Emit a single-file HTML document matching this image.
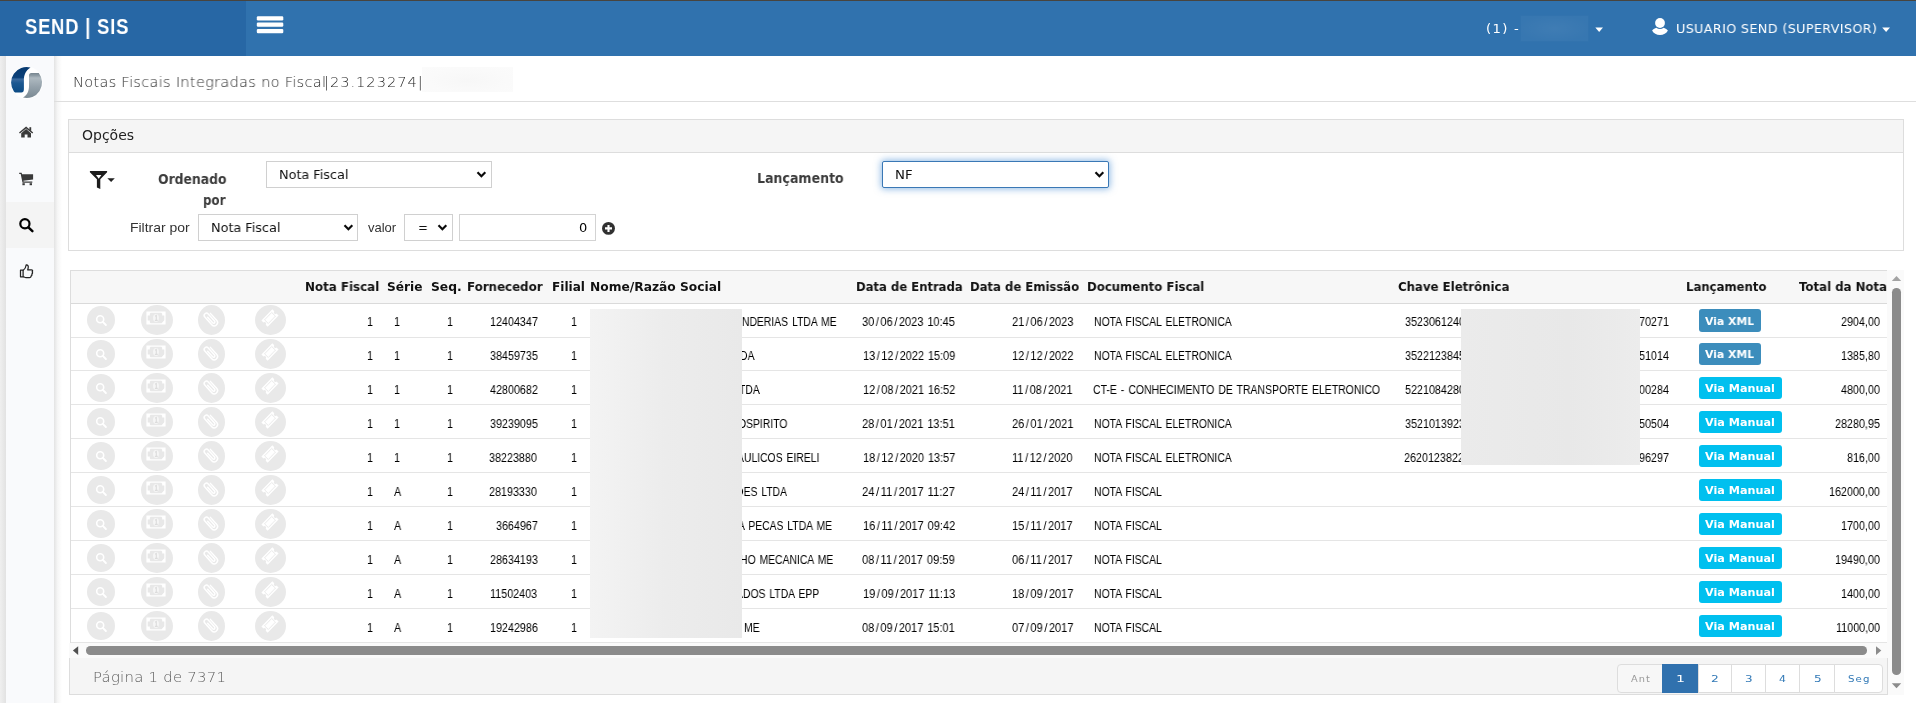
<!DOCTYPE html>
<html lang="pt-BR">
<head>
<meta charset="utf-8">
<title>SEND | SIS - Notas Fiscais Integradas no Fiscal</title>
<style>
html,body{margin:0;padding:0}
body{width:1916px;height:703px;overflow:hidden;background:#fff;position:relative;font-family:"Liberation Sans",sans-serif;font-size:12px;color:#000}
header,aside,main,section,nav,table,thead,tbody,tr,th,td,ul,li,form,label,footer,h1,h2{display:contents;margin:0;padding:0;font:inherit}
.a{position:absolute;box-sizing:border-box}
.t{position:absolute;z-index:3;will-change:transform;white-space:pre;line-height:1;display:block;transform-origin:0 0}
svg.a{overflow:visible}
.sel{position:absolute;box-sizing:border-box;background:#fff;border:1px solid #d0d0d0;border-radius:0}
.circ{position:absolute;box-sizing:border-box;background:#e9e9e9;border-radius:50%}
.rowline{position:absolute;left:71px;width:1816px;height:1px;background:#e5e5e5}
.btn{position:absolute;box-sizing:border-box;border-radius:3px}
.pg{position:absolute;box-sizing:border-box;top:664px;height:29px;border:1px solid #ddd;background:#fff}
.t i{display:inline-block;font-style:normal;width:.56em;text-align:center}
</style>
</head>
<body>
<header><div class="a" style="left:0;top:0;width:1916px;height:56px;background:#3072ae"></div><div class="a" style="left:0;top:0;width:246px;height:56px;background:#2767a5"></div><div class="a" style="left:0;top:0;width:1916px;height:1px;background:#48443e"></div><span class="t" style="left:24.59px;top:16.20px;font-family:'Liberation Sans', sans-serif;font-size:21.6px;font-weight:700;color:#fff;letter-spacing:1px;transform:scaleX(0.8480);">SEND | SIS</span><svg class="a" style="left:256px;top:15px" width="28" height="20" viewBox="256 15 28 20"><g fill="#fff"><rect x="256.8" y="16.3" width="26.5" height="4.2" rx="1.2"/><rect x="256.8" y="22.6" width="26.5" height="4.2" rx="1.2"/><rect x="256.8" y="28.9" width="26.5" height="4.3" rx="1.2"/></g></svg><nav><span class="t" style="left:1486.02px;top:21.90px;font-family:'DejaVu Sans', 'Liberation Sans', sans-serif;font-size:13px;font-weight:400;color:#fff;letter-spacing:1.3px;transform:scaleX(1.0124);">(1) -</span><div class="a" style="left:1521px;top:16px;width:67px;height:25px;background:radial-gradient(ellipse at 50% 50%,rgba(255,255,255,.075),rgba(255,255,255,.035) 75%);box-shadow:0 0 2px 1px rgba(255,255,255,.02)"></div><svg class="a" style="left:1595px;top:27px" width="9" height="6" viewBox="0 0 9 6"><path d="M0.3,0.6 H8 L4.15,4.9 Z" fill="#fff"/></svg><svg class="a" style="left:1651px;top:18px" width="18" height="18" viewBox="1651 18 18 18"><g fill="#fff"><circle cx="1660" cy="23" r="4.9"/><path d="M1652.1,30.5 C1653.4,29 1655,28.2 1656.3,27.7 C1658.5,29.4 1661.5,29.4 1663.7,27.7 C1665,28.2 1666.6,29 1667.9,30.5 C1666.5,33.3 1663.5,35 1660,35 C1656.5,35 1653.5,33.3 1652.1,30.5 Z"/></g></svg><span class="t" style="left:1676.18px;top:21.90px;font-family:'DejaVu Sans', 'Liberation Sans', sans-serif;font-size:13px;font-weight:400;color:#fff;letter-spacing:0.4px;transform:scaleX(0.9763);">USUARIO SEND (SUPERVISOR)</span><svg class="a" style="left:1882px;top:27px" width="9" height="6" viewBox="0 0 9 6"><path d="M0.2,0.6 H8 L4.1,4.9 Z" fill="#fff"/></svg></nav></header><aside><div class="a" style="left:0;top:56px;width:6px;height:647px;background:linear-gradient(90deg,#efefef,#e2e2e2)"></div><div class="a" style="left:6px;top:56px;width:48px;height:647px;background:#f9fafc"></div><div class="a" style="left:54px;top:56px;width:8px;height:647px;background:linear-gradient(90deg,#e3e3e3,#f6f6f6 45%,#fff)"></div><div class="a" style="left:6px;top:202px;width:48px;height:46px;background:#f4f4f4"></div><svg class="a" style="left:6px;top:62px" width="42" height="42" viewBox="0 0 42 42">
<defs><linearGradient id="lgb" x1="0" y1="5" x2="0" y2="31" gradientUnits="userSpaceOnUse"><stop offset="0" stop-color="#083a70"/><stop offset=".40" stop-color="#0b4079"/><stop offset=".47" stop-color="#3a6a9f"/><stop offset=".62" stop-color="#1c5891"/><stop offset="1" stop-color="#0b4a84"/></linearGradient>
<linearGradient id="lgg" x1="0" y1="11" x2="0" y2="36" gradientUnits="userSpaceOnUse"><stop offset="0" stop-color="#77858f"/><stop offset=".1" stop-color="#8e9ba4"/><stop offset=".2" stop-color="#aeb9c0"/><stop offset=".55" stop-color="#95a2ab"/><stop offset="1" stop-color="#7a8993"/></linearGradient></defs>
<circle cx="20.6" cy="20.6" r="16.2" fill="#fff"/>
<path d="M24.5,5.5 A15.5,15.5 0 0 0 7.9,29.4 C8.6,30.3 9.5,30.6 10.5,30.6 L15.3,30.6 C17.1,30.5 17.9,29.2 17.9,27.2 L17.9,18 C17.9,13 19.7,8.6 24.5,5.5 Z" fill="url(#lgb)"/>
<path d="M23,13.6 C23,12 23.8,11 25.3,11 L32.8,11 A15.5,15.5 0 0 1 17,35.6 C21.6,33 23,28.5 23,24 Z" fill="url(#lgg)"/>
</svg><svg class="a" style="left:18px;top:125px" width="17" height="14" viewBox="18 125 17 14"><g fill="#3a3a3a"><path d="M19,132.6 L26.1,126.6 L33.2,132.6 L32.3,133.6 L26.1,128.4 L19.9,133.6 Z"/><rect x="29.4" y="127.2" width="1.8" height="3.6"/><path d="M21.2,133.2 L26.1,129.1 L31,133.2 V137.6 H27.5 V134.4 H24.7 V137.6 H21.2 Z"/></g></svg><svg class="a" style="left:18px;top:171px" width="17" height="16" viewBox="18 171 17 16"><g fill="#3a3a3a"><path d="M19.2,172.8 H21.6 L22.1,174.3 H33.1 V179.4 L23.3,180.7 L23.6,181.6 H32.3 V182.8 H22.5 L20.7,174 H19.2 Z"/><rect x="22.4" y="183.2" width="2.4" height="2"/><rect x="29.6" y="183.2" width="2.4" height="2"/></g></svg><svg class="a" style="left:18px;top:217px" width="17" height="17" viewBox="18 217 17 17"><circle cx="24.9" cy="223.8" r="4.6" fill="none" stroke="#000" stroke-width="2.2"/><path d="M28.4,227.4 L32.4,231.2" stroke="#000" stroke-width="2.5" stroke-linecap="round"/></svg><svg class="a" style="left:18px;top:263px" width="17" height="17" viewBox="18 263 17 17"><g fill="none" stroke="#222" stroke-width="1.25" stroke-linejoin="round"><rect x="20.5" y="270.2" width="2.6" height="6.6"/><path d="M23.1,270.6 C25.2,269.2 26,266.6 26.2,264.8 C27.8,264.6 28.6,266 28.2,267.8 L27.7,269.8 H31.4 C32.6,269.8 33,271 32.2,271.8 C32.8,272.6 32.6,273.6 31.8,274 C32.2,274.9 31.8,275.7 31,276 C31.1,277 30.5,277.6 29.4,277.6 H26 C24.8,277.6 24,276.8 23.1,276.6"/></g></svg></aside><main><h1><span class="t" style="left:72.54px;top:74.70px;font-family:'DejaVu Sans', 'Liberation Sans', sans-serif;font-size:14.6px;font-weight:200;color:#262626;letter-spacing:0.3px;transform:scaleX(0.9958);">Notas Fiscais Integradas no Fiscal</span><span class="t" style="left:324.16px;top:74.70px;font-family:'DejaVu Sans', 'Liberation Sans', sans-serif;font-size:14.6px;font-weight:200;color:#262626;letter-spacing:0.95px;transform:scaleX(1.0047);">|23.123274|</span></h1><div class="a" style="left:422px;top:67px;width:91px;height:25px;background:radial-gradient(ellipse at 50% 55%,#f7f7f7,#fafafa 60%,#fbfbfb)"></div><div class="a" style="left:54px;top:101px;width:1862px;height:1px;background:#dedede"></div><section><div class="a" style="left:68px;top:119px;width:1836px;height:132px;border:1px solid #ddd;background:#fff"></div><div class="a" style="left:69px;top:120px;width:1834px;height:33px;background:#f5f5f5;border-bottom:1px solid #ddd"></div><h2><span class="t" style="left:81.60px;top:127.70px;font-family:'DejaVu Sans', 'Liberation Sans', sans-serif;font-size:14px;font-weight:400;color:#222;">Opções</span></h2><svg class="a" style="left:89px;top:170px" width="27" height="20" viewBox="89 170 27 20"><path d="M89.9,170.9 H107.1 V172.3 L100.3,179.3 V188.9 L96.9,187.5 V179.3 L89.9,172.3 Z" fill="#1c1c1c"/><path d="M96,174.9 H101.4 L98.7,178.7 Z" fill="#fff"/><path d="M107.4,178.2 H114.8 L111.1,181.9 Z" fill="#222"/></svg><form><label><span class="t" style="left:157.91px;top:171.70px;font-family:'DejaVu Sans', 'Liberation Sans', sans-serif;font-size:14px;font-weight:700;color:#3c3c3c;transform:scaleX(0.8855);">Ordenado</span><span class="t" style="left:203.40px;top:192.60px;font-family:'DejaVu Sans', 'Liberation Sans', sans-serif;font-size:14px;font-weight:700;color:#3c3c3c;transform:scaleX(0.8424);">por</span></label><div class="sel" style="left:266px;top:161px;width:226px;height:27px"></div><span class="t" style="left:278.92px;top:168.20px;font-family:'DejaVu Sans', 'Liberation Sans', sans-serif;font-size:13px;font-weight:400;color:#111;transform:scaleX(0.9840);">Nota Fiscal</span><svg class="a" style="left:476.2px;top:171.2px" width="11" height="7" viewBox="0 0 11 7"><path d="M1.5,1.3 L5.4,5.2 L9.3,1.3" fill="none" stroke="#0a0a0a" stroke-width="2.2" stroke-linecap="butt"/></svg><label><span class="t" style="left:757.33px;top:171.40px;font-family:'DejaVu Sans', 'Liberation Sans', sans-serif;font-size:14px;font-weight:700;color:#3c3c3c;transform:scaleX(0.8986);">Lançamento</span></label><div class="sel" style="left:882px;top:161px;width:227px;height:27px;border-color:#3a78b5;border-radius:2px;box-shadow:0 0 7px 1px rgba(70,140,210,.6)"></div><span class="t" style="left:895.47px;top:168.20px;font-family:'DejaVu Sans', 'Liberation Sans', sans-serif;font-size:13px;font-weight:400;color:#111;transform:scaleX(1.0221);">NF</span><svg class="a" style="left:1093.6px;top:171.2px" width="11" height="7" viewBox="0 0 11 7"><path d="M1.5,1.3 L5.4,5.2 L9.3,1.3" fill="none" stroke="#0a0a0a" stroke-width="2.2" stroke-linecap="butt"/></svg><label><span class="t" style="left:130.24px;top:220.70px;font-family:'Liberation Sans', sans-serif;font-size:13px;font-weight:400;color:#333;transform:scaleX(1.0722);">Filtrar por</span></label><div class="sel" style="left:198px;top:214px;width:160px;height:27px"></div><span class="t" style="left:211.02px;top:220.70px;font-family:'DejaVu Sans', 'Liberation Sans', sans-serif;font-size:13px;font-weight:400;color:#111;transform:scaleX(0.9840);">Nota Fiscal</span><svg class="a" style="left:342.7px;top:223.9px" width="11" height="7" viewBox="0 0 11 7"><path d="M1.5,1.3 L5.4,5.2 L9.3,1.3" fill="none" stroke="#0a0a0a" stroke-width="2.2" stroke-linecap="butt"/></svg><label><span class="t" style="left:367.85px;top:220.70px;font-family:'Liberation Sans', sans-serif;font-size:13px;font-weight:400;color:#333;">valor</span></label><div class="sel" style="left:404px;top:214px;width:49px;height:27px"></div><span class="t" style="left:417.53px;top:220.70px;font-family:'DejaVu Sans', 'Liberation Sans', sans-serif;font-size:13px;font-weight:400;color:#111;transform:scaleX(0.9116);">=</span><svg class="a" style="left:437.4px;top:223.9px" width="11" height="7" viewBox="0 0 11 7"><path d="M1.5,1.3 L5.4,5.2 L9.3,1.3" fill="none" stroke="#0a0a0a" stroke-width="2.2" stroke-linecap="butt"/></svg><div class="sel" style="left:459px;top:214px;width:137px;height:27px;border-radius:0;border-color:#d3d3d3"></div><span class="t" style="left:578.91px;top:220.70px;font-family:'DejaVu Sans', 'Liberation Sans', sans-serif;font-size:13px;font-weight:400;color:#000;transform:scaleX(0.9892);">0</span><svg class="a" style="left:601px;top:221px" width="15" height="15" viewBox="601 221 15 15"><circle cx="608.5" cy="228.4" r="6.45" fill="#303030"/><path d="M608.5,224.9 V231.9 M605,228.4 H612" stroke="#fff" stroke-width="2.1"/></svg></form></section><section><div class="a" style="left:70px;top:270px;width:1818px;height:374px;border:1px solid #ddd;border-right:none;background:#fff"></div><div class="a" style="left:71px;top:271px;width:1816px;height:32px;background:#f7f7f7"></div><div class="a" style="left:71px;top:303px;width:1816px;height:1px;background:#dadada"></div><table><thead><tr><th></th><th></th><th></th><th></th><th><span class="t" style="left:305.18px;top:280.70px;font-family:'DejaVu Sans', 'Liberation Sans', sans-serif;font-size:12px;font-weight:700;color:#111;transform:scaleX(0.9894);">Nota Fiscal</span></th><th><span class="t" style="left:386.79px;top:280.70px;font-family:'DejaVu Sans', 'Liberation Sans', sans-serif;font-size:12px;font-weight:700;color:#111;transform:scaleX(1.0133);">Série</span></th><th><span class="t" style="left:430.57px;top:280.70px;font-family:'DejaVu Sans', 'Liberation Sans', sans-serif;font-size:12px;font-weight:700;color:#111;transform:scaleX(1.0268);">Seq.</span></th><th><span class="t" style="left:467.39px;top:280.70px;font-family:'DejaVu Sans', 'Liberation Sans', sans-serif;font-size:12px;font-weight:700;color:#111;transform:scaleX(0.9869);">Fornecedor</span></th><th><span class="t" style="left:551.56px;top:280.70px;font-family:'DejaVu Sans', 'Liberation Sans', sans-serif;font-size:12px;font-weight:700;color:#111;transform:scaleX(1.0063);">Filial</span></th><th><span class="t" style="left:590.45px;top:280.70px;font-family:'DejaVu Sans', 'Liberation Sans', sans-serif;font-size:12px;font-weight:700;color:#111;transform:scaleX(1.0212);">Nome/Razão Social</span></th><th><span class="t" style="left:855.61px;top:280.70px;font-family:'DejaVu Sans', 'Liberation Sans', sans-serif;font-size:12px;font-weight:700;color:#111;transform:scaleX(0.9688);">Data de Entrada</span></th><th><span class="t" style="left:970.40px;top:280.70px;font-family:'DejaVu Sans', 'Liberation Sans', sans-serif;font-size:12px;font-weight:700;color:#111;transform:scaleX(0.9703);">Data de Emissão</span></th><th><span class="t" style="left:1087.40px;top:280.70px;font-family:'DejaVu Sans', 'Liberation Sans', sans-serif;font-size:12px;font-weight:700;color:#111;transform:scaleX(0.9779);">Documento Fiscal</span></th><th><span class="t" style="left:1398.17px;top:280.70px;font-family:'DejaVu Sans', 'Liberation Sans', sans-serif;font-size:12px;font-weight:700;color:#111;transform:scaleX(0.9791);">Chave Eletrônica</span></th><th><span class="t" style="left:1686.30px;top:280.70px;font-family:'DejaVu Sans', 'Liberation Sans', sans-serif;font-size:12px;font-weight:700;color:#111;transform:scaleX(0.9721);">Lançamento</span></th><th><span class="t" style="left:1799.22px;top:280.70px;font-family:'DejaVu Sans', 'Liberation Sans', sans-serif;font-size:12px;font-weight:700;color:#111;transform:scaleX(0.9796);">Total da Nota</span></th></tr></thead><tbody><tr><td><div class="circ" style="left:86.8px;top:305.8px;width:28.2px;height:28.2px"></div><svg class="a" style="left:89.2px;top:308.4px" width="24" height="24" viewBox="-12 -12 24 24"><circle cx="-0.8" cy="-0.7" r="3.5" fill="none" stroke="#fff" stroke-width="1.6"/><path d="M1.8,1.9 L4.9,5" stroke="#fff" stroke-width="1.9" stroke-linecap="round"/></svg></td><td><div class="circ" style="left:140.9px;top:304.8px;width:32.0px;height:30.2px"></div><svg class="a" style="left:144.0px;top:306.0px" width="24" height="24" viewBox="-12 -12 24 24"><rect x="-9.6" y="-6.5" width="19.2" height="13" fill="#fff"/><path d="M-5.4,-5.2 H5.4 L6.2,-4.2 L6.2,-2.6 L8.3,-2.6 V2.2 L5.6,5.2 H-5.4 L-6.2,4.2 L-6.2,2.6 L-8.3,2.6 V-2.6 L-6.2,-2.6 L-6.2,-4.2 Z" fill="#e8e8e8"/><ellipse cx="0" cy="0" rx="2.9" ry="4" fill="#f6f6f6"/><path d="M-0.9,-1.7 L0.3,-2.5 V2.3 M-1.1,2.4 H1.7" stroke="#dcdcdc" stroke-width="1.1" fill="none"/></svg></td><td><div class="circ" style="left:197.8px;top:304.8px;width:27.2px;height:30.2px"></div><svg class="a" style="left:199.0px;top:306.7px" width="24" height="24" viewBox="-12 -12 24 24"><g transform="rotate(-42)" fill="none" stroke="#fff" stroke-width="1.45" stroke-linecap="round"><path d="M3.3,-4.6 V4.8 A3.3,3.3 0 0 1 -3.3,4.8 V-5.6 A2.3,2.3 0 0 1 1.3,-5.6 V3.9 A1.3,1.3 0 0 1 -1.3,3.9 V-3.6"/></g></svg></td><td><div class="circ" style="left:254.7px;top:304.8px;width:31.3px;height:30.2px"></div><svg class="a" style="left:258.0px;top:306.4px" width="24" height="24" viewBox="-12 -12 24 24"><g transform="rotate(-46) scale(.87)"><path d="M-9,-5 H9 V-1.8 A1.8,1.8 0 0 0 9,1.8 V5 H-9 V1.8 A1.8,1.8 0 0 0 -9,-1.8 Z" fill="#fff"/><rect x="-5.9" y="-3" width="11.8" height="6" fill="none" stroke="#e4e4e4" stroke-width="0.9"/></g></svg></td><td><span class="t" style="left:366.52px;top:315.90px;font-family:'Liberation Sans', sans-serif;font-size:12px;font-weight:400;color:#000;transform:scaleX(0.8970);">1</span></td><td><span class="t" style="left:393.90px;top:315.90px;font-family:'Liberation Sans', sans-serif;font-size:12px;font-weight:400;color:#000;transform:scaleX(0.8970);">1</span></td><td><span class="t" style="left:447.02px;top:315.90px;font-family:'Liberation Sans', sans-serif;font-size:12px;font-weight:400;color:#000;transform:scaleX(0.8970);">1</span></td><td><span class="t" style="left:489.53px;top:315.90px;font-family:'Liberation Sans', sans-serif;font-size:12px;font-weight:400;color:#000;transform:scaleX(0.8970);">12404347</span></td><td><span class="t" style="left:570.62px;top:315.90px;font-family:'Liberation Sans', sans-serif;font-size:12px;font-weight:400;color:#000;transform:scaleX(0.8970);">1</span></td><td><span class="t" style="left:735.21px;top:315.90px;font-family:'Liberation Sans', sans-serif;font-size:12px;font-weight:400;color:#000;word-spacing:1.2px;transform:scaleX(0.8650);">ANDERIAS LTDA ME</span></td><td><span class="t" style="left:862.17px;top:315.90px;font-family:'Liberation Sans', sans-serif;font-size:12px;font-weight:400;color:#000;word-spacing:1px;transform:scaleX(0.9180);">30<i>/</i>06<i>/</i>2023 10:45</span></td><td><span class="t" style="left:1011.51px;top:315.90px;font-family:'Liberation Sans', sans-serif;font-size:12px;font-weight:400;color:#000;transform:scaleX(0.9180);">21<i>/</i>06<i>/</i>2023</span></td><td><span class="t" style="left:1093.83px;top:315.90px;font-family:'Liberation Sans', sans-serif;font-size:12px;font-weight:400;color:#000;word-spacing:1.2px;transform:scaleX(0.8658);">NOTA FISCAL ELETRONICA</span></td><td><span class="t" style="left:1404.58px;top:315.90px;font-family:'Liberation Sans', sans-serif;font-size:12px;font-weight:400;color:#000;transform:scaleX(0.8970);">3523061240</span><span class="t" style="left:1638.66px;top:315.90px;font-family:'Liberation Sans', sans-serif;font-size:12px;font-weight:400;color:#000;transform:scaleX(0.8970);">70271</span></td><td><div class="btn" style="left:1699px;top:309px;width:62px;height:23px;background:#3c8dbc"></div><span class="t" style="left:1705.45px;top:316.00px;font-family:'DejaVu Sans', 'Liberation Sans', sans-serif;font-size:11px;font-weight:700;color:#fff;transform:scaleX(0.9880);">Via XML</span></td><td><span class="t" style="left:1840.81px;top:315.90px;font-family:'Liberation Sans', sans-serif;font-size:12px;font-weight:400;color:#000;transform:scaleX(0.8970);">2904,00</span><div class="rowline" style="top:337px"></div></td></tr>
<tr><td><div class="circ" style="left:86.8px;top:339.8px;width:28.2px;height:28.2px"></div><svg class="a" style="left:89.2px;top:342.4px" width="24" height="24" viewBox="-12 -12 24 24"><circle cx="-0.8" cy="-0.7" r="3.5" fill="none" stroke="#fff" stroke-width="1.6"/><path d="M1.8,1.9 L4.9,5" stroke="#fff" stroke-width="1.9" stroke-linecap="round"/></svg></td><td><div class="circ" style="left:140.9px;top:338.8px;width:32.0px;height:30.2px"></div><svg class="a" style="left:144.0px;top:340.0px" width="24" height="24" viewBox="-12 -12 24 24"><rect x="-9.6" y="-6.5" width="19.2" height="13" fill="#fff"/><path d="M-5.4,-5.2 H5.4 L6.2,-4.2 L6.2,-2.6 L8.3,-2.6 V2.2 L5.6,5.2 H-5.4 L-6.2,4.2 L-6.2,2.6 L-8.3,2.6 V-2.6 L-6.2,-2.6 L-6.2,-4.2 Z" fill="#e8e8e8"/><ellipse cx="0" cy="0" rx="2.9" ry="4" fill="#f6f6f6"/><path d="M-0.9,-1.7 L0.3,-2.5 V2.3 M-1.1,2.4 H1.7" stroke="#dcdcdc" stroke-width="1.1" fill="none"/></svg></td><td><div class="circ" style="left:197.8px;top:338.8px;width:27.2px;height:30.2px"></div><svg class="a" style="left:199.0px;top:340.7px" width="24" height="24" viewBox="-12 -12 24 24"><g transform="rotate(-42)" fill="none" stroke="#fff" stroke-width="1.45" stroke-linecap="round"><path d="M3.3,-4.6 V4.8 A3.3,3.3 0 0 1 -3.3,4.8 V-5.6 A2.3,2.3 0 0 1 1.3,-5.6 V3.9 A1.3,1.3 0 0 1 -1.3,3.9 V-3.6"/></g></svg></td><td><div class="circ" style="left:254.7px;top:338.8px;width:31.3px;height:30.2px"></div><svg class="a" style="left:258.0px;top:340.4px" width="24" height="24" viewBox="-12 -12 24 24"><g transform="rotate(-46) scale(.87)"><path d="M-9,-5 H9 V-1.8 A1.8,1.8 0 0 0 9,1.8 V5 H-9 V1.8 A1.8,1.8 0 0 0 -9,-1.8 Z" fill="#fff"/><rect x="-5.9" y="-3" width="11.8" height="6" fill="none" stroke="#e4e4e4" stroke-width="0.9"/></g></svg></td><td><span class="t" style="left:366.52px;top:349.90px;font-family:'Liberation Sans', sans-serif;font-size:12px;font-weight:400;color:#000;transform:scaleX(0.8970);">1</span></td><td><span class="t" style="left:393.90px;top:349.90px;font-family:'Liberation Sans', sans-serif;font-size:12px;font-weight:400;color:#000;transform:scaleX(0.8970);">1</span></td><td><span class="t" style="left:447.02px;top:349.90px;font-family:'Liberation Sans', sans-serif;font-size:12px;font-weight:400;color:#000;transform:scaleX(0.8970);">1</span></td><td><span class="t" style="left:489.52px;top:349.90px;font-family:'Liberation Sans', sans-serif;font-size:12px;font-weight:400;color:#000;transform:scaleX(0.8970);">38459735</span></td><td><span class="t" style="left:570.62px;top:349.90px;font-family:'Liberation Sans', sans-serif;font-size:12px;font-weight:400;color:#000;transform:scaleX(0.8970);">1</span></td><td><span class="t" style="left:739.90px;top:349.90px;font-family:'Liberation Sans', sans-serif;font-size:12px;font-weight:400;color:#000;word-spacing:1.2px;transform:scaleX(0.8650);">DA</span></td><td><span class="t" style="left:862.79px;top:349.90px;font-family:'Liberation Sans', sans-serif;font-size:12px;font-weight:400;color:#000;word-spacing:1px;transform:scaleX(0.9120);">13<i>/</i>12<i>/</i>2022 15:09</span></td><td><span class="t" style="left:1011.51px;top:349.90px;font-family:'Liberation Sans', sans-serif;font-size:12px;font-weight:400;color:#000;transform:scaleX(0.9180);">12<i>/</i>12<i>/</i>2022</span></td><td><span class="t" style="left:1093.83px;top:349.90px;font-family:'Liberation Sans', sans-serif;font-size:12px;font-weight:400;color:#000;word-spacing:1.2px;transform:scaleX(0.8658);">NOTA FISCAL ELETRONICA</span></td><td><span class="t" style="left:1404.58px;top:349.90px;font-family:'Liberation Sans', sans-serif;font-size:12px;font-weight:400;color:#000;transform:scaleX(0.8970);">3522123845</span><span class="t" style="left:1638.50px;top:349.90px;font-family:'Liberation Sans', sans-serif;font-size:12px;font-weight:400;color:#000;transform:scaleX(0.8970);">51014</span></td><td><div class="btn" style="left:1699px;top:343px;width:62px;height:22px;background:#3c8dbc"></div><span class="t" style="left:1705.45px;top:349.00px;font-family:'DejaVu Sans', 'Liberation Sans', sans-serif;font-size:11px;font-weight:700;color:#fff;transform:scaleX(0.9880);">Via XML</span></td><td><span class="t" style="left:1840.81px;top:349.90px;font-family:'Liberation Sans', sans-serif;font-size:12px;font-weight:400;color:#000;transform:scaleX(0.8970);">1385,80</span><div class="rowline" style="top:370px"></div></td></tr>
<tr><td><div class="circ" style="left:86.8px;top:373.8px;width:28.2px;height:28.2px"></div><svg class="a" style="left:89.2px;top:376.4px" width="24" height="24" viewBox="-12 -12 24 24"><circle cx="-0.8" cy="-0.7" r="3.5" fill="none" stroke="#fff" stroke-width="1.6"/><path d="M1.8,1.9 L4.9,5" stroke="#fff" stroke-width="1.9" stroke-linecap="round"/></svg></td><td><div class="circ" style="left:140.9px;top:372.8px;width:32.0px;height:30.2px"></div><svg class="a" style="left:144.0px;top:374.0px" width="24" height="24" viewBox="-12 -12 24 24"><rect x="-9.6" y="-6.5" width="19.2" height="13" fill="#fff"/><path d="M-5.4,-5.2 H5.4 L6.2,-4.2 L6.2,-2.6 L8.3,-2.6 V2.2 L5.6,5.2 H-5.4 L-6.2,4.2 L-6.2,2.6 L-8.3,2.6 V-2.6 L-6.2,-2.6 L-6.2,-4.2 Z" fill="#e8e8e8"/><ellipse cx="0" cy="0" rx="2.9" ry="4" fill="#f6f6f6"/><path d="M-0.9,-1.7 L0.3,-2.5 V2.3 M-1.1,2.4 H1.7" stroke="#dcdcdc" stroke-width="1.1" fill="none"/></svg></td><td><div class="circ" style="left:197.8px;top:372.8px;width:27.2px;height:30.2px"></div><svg class="a" style="left:199.0px;top:374.7px" width="24" height="24" viewBox="-12 -12 24 24"><g transform="rotate(-42)" fill="none" stroke="#fff" stroke-width="1.45" stroke-linecap="round"><path d="M3.3,-4.6 V4.8 A3.3,3.3 0 0 1 -3.3,4.8 V-5.6 A2.3,2.3 0 0 1 1.3,-5.6 V3.9 A1.3,1.3 0 0 1 -1.3,3.9 V-3.6"/></g></svg></td><td><div class="circ" style="left:254.7px;top:372.8px;width:31.3px;height:30.2px"></div><svg class="a" style="left:258.0px;top:374.4px" width="24" height="24" viewBox="-12 -12 24 24"><g transform="rotate(-46) scale(.87)"><path d="M-9,-5 H9 V-1.8 A1.8,1.8 0 0 0 9,1.8 V5 H-9 V1.8 A1.8,1.8 0 0 0 -9,-1.8 Z" fill="#fff"/><rect x="-5.9" y="-3" width="11.8" height="6" fill="none" stroke="#e4e4e4" stroke-width="0.9"/></g></svg></td><td><span class="t" style="left:366.52px;top:383.90px;font-family:'Liberation Sans', sans-serif;font-size:12px;font-weight:400;color:#000;transform:scaleX(0.8970);">1</span></td><td><span class="t" style="left:393.90px;top:383.90px;font-family:'Liberation Sans', sans-serif;font-size:12px;font-weight:400;color:#000;transform:scaleX(0.8970);">1</span></td><td><span class="t" style="left:447.02px;top:383.90px;font-family:'Liberation Sans', sans-serif;font-size:12px;font-weight:400;color:#000;transform:scaleX(0.8970);">1</span></td><td><span class="t" style="left:489.53px;top:383.90px;font-family:'Liberation Sans', sans-serif;font-size:12px;font-weight:400;color:#000;transform:scaleX(0.8970);">42800682</span></td><td><span class="t" style="left:570.62px;top:383.90px;font-family:'Liberation Sans', sans-serif;font-size:12px;font-weight:400;color:#000;transform:scaleX(0.8970);">1</span></td><td><span class="t" style="left:738.93px;top:383.90px;font-family:'Liberation Sans', sans-serif;font-size:12px;font-weight:400;color:#000;word-spacing:1.2px;transform:scaleX(0.8650);">TDA</span></td><td><span class="t" style="left:862.79px;top:383.90px;font-family:'Liberation Sans', sans-serif;font-size:12px;font-weight:400;color:#000;word-spacing:1px;transform:scaleX(0.9120);">12<i>/</i>08<i>/</i>2021 16:52</span></td><td><span class="t" style="left:1012.42px;top:383.90px;font-family:'Liberation Sans', sans-serif;font-size:12px;font-weight:400;color:#000;transform:scaleX(0.9180);">11<i>/</i>08<i>/</i>2021</span></td><td><span class="t" style="left:1093.14px;top:383.90px;font-family:'Liberation Sans', sans-serif;font-size:12px;font-weight:400;color:#000;word-spacing:1.2px;transform:scaleX(0.8734);">CT-E - CONHECIMENTO DE TRANSPORTE ELETRONICO</span></td><td><span class="t" style="left:1404.54px;top:383.90px;font-family:'Liberation Sans', sans-serif;font-size:12px;font-weight:400;color:#000;transform:scaleX(0.8970);">5221084280</span><span class="t" style="left:1638.50px;top:383.90px;font-family:'Liberation Sans', sans-serif;font-size:12px;font-weight:400;color:#000;transform:scaleX(0.8970);">00284</span></td><td><div class="btn" style="left:1699px;top:377px;width:83px;height:22px;background:#00c0ef"></div><span class="t" style="left:1705.44px;top:383.00px;font-family:'DejaVu Sans', 'Liberation Sans', sans-serif;font-size:11px;font-weight:700;color:#fff;transform:scaleX(1.0190);">Via Manual</span></td><td><span class="t" style="left:1840.81px;top:383.90px;font-family:'Liberation Sans', sans-serif;font-size:12px;font-weight:400;color:#000;transform:scaleX(0.8970);">4800,00</span><div class="rowline" style="top:404px"></div></td></tr>
<tr><td><div class="circ" style="left:86.8px;top:407.8px;width:28.2px;height:28.2px"></div><svg class="a" style="left:89.2px;top:410.4px" width="24" height="24" viewBox="-12 -12 24 24"><circle cx="-0.8" cy="-0.7" r="3.5" fill="none" stroke="#fff" stroke-width="1.6"/><path d="M1.8,1.9 L4.9,5" stroke="#fff" stroke-width="1.9" stroke-linecap="round"/></svg></td><td><div class="circ" style="left:140.9px;top:406.8px;width:32.0px;height:30.2px"></div><svg class="a" style="left:144.0px;top:408.0px" width="24" height="24" viewBox="-12 -12 24 24"><rect x="-9.6" y="-6.5" width="19.2" height="13" fill="#fff"/><path d="M-5.4,-5.2 H5.4 L6.2,-4.2 L6.2,-2.6 L8.3,-2.6 V2.2 L5.6,5.2 H-5.4 L-6.2,4.2 L-6.2,2.6 L-8.3,2.6 V-2.6 L-6.2,-2.6 L-6.2,-4.2 Z" fill="#e8e8e8"/><ellipse cx="0" cy="0" rx="2.9" ry="4" fill="#f6f6f6"/><path d="M-0.9,-1.7 L0.3,-2.5 V2.3 M-1.1,2.4 H1.7" stroke="#dcdcdc" stroke-width="1.1" fill="none"/></svg></td><td><div class="circ" style="left:197.8px;top:406.8px;width:27.2px;height:30.2px"></div><svg class="a" style="left:199.0px;top:408.7px" width="24" height="24" viewBox="-12 -12 24 24"><g transform="rotate(-42)" fill="none" stroke="#fff" stroke-width="1.45" stroke-linecap="round"><path d="M3.3,-4.6 V4.8 A3.3,3.3 0 0 1 -3.3,4.8 V-5.6 A2.3,2.3 0 0 1 1.3,-5.6 V3.9 A1.3,1.3 0 0 1 -1.3,3.9 V-3.6"/></g></svg></td><td><div class="circ" style="left:254.7px;top:406.8px;width:31.3px;height:30.2px"></div><svg class="a" style="left:258.0px;top:408.4px" width="24" height="24" viewBox="-12 -12 24 24"><g transform="rotate(-46) scale(.87)"><path d="M-9,-5 H9 V-1.8 A1.8,1.8 0 0 0 9,1.8 V5 H-9 V1.8 A1.8,1.8 0 0 0 -9,-1.8 Z" fill="#fff"/><rect x="-5.9" y="-3" width="11.8" height="6" fill="none" stroke="#e4e4e4" stroke-width="0.9"/></g></svg></td><td><span class="t" style="left:366.52px;top:417.90px;font-family:'Liberation Sans', sans-serif;font-size:12px;font-weight:400;color:#000;transform:scaleX(0.8970);">1</span></td><td><span class="t" style="left:393.90px;top:417.90px;font-family:'Liberation Sans', sans-serif;font-size:12px;font-weight:400;color:#000;transform:scaleX(0.8970);">1</span></td><td><span class="t" style="left:447.02px;top:417.90px;font-family:'Liberation Sans', sans-serif;font-size:12px;font-weight:400;color:#000;transform:scaleX(0.8970);">1</span></td><td><span class="t" style="left:489.52px;top:417.90px;font-family:'Liberation Sans', sans-serif;font-size:12px;font-weight:400;color:#000;transform:scaleX(0.8970);">39239095</span></td><td><span class="t" style="left:570.62px;top:417.90px;font-family:'Liberation Sans', sans-serif;font-size:12px;font-weight:400;color:#000;transform:scaleX(0.8970);">1</span></td><td><span class="t" style="left:738.45px;top:417.90px;font-family:'Liberation Sans', sans-serif;font-size:12px;font-weight:400;color:#000;word-spacing:1.2px;transform:scaleX(0.8650);">OSPIRITO</span></td><td><span class="t" style="left:862.22px;top:417.90px;font-family:'Liberation Sans', sans-serif;font-size:12px;font-weight:400;color:#000;word-spacing:1px;transform:scaleX(0.9174);">28<i>/</i>01<i>/</i>2021 13:51</span></td><td><span class="t" style="left:1011.50px;top:417.90px;font-family:'Liberation Sans', sans-serif;font-size:12px;font-weight:400;color:#000;transform:scaleX(0.9180);">26<i>/</i>01<i>/</i>2021</span></td><td><span class="t" style="left:1093.83px;top:417.90px;font-family:'Liberation Sans', sans-serif;font-size:12px;font-weight:400;color:#000;word-spacing:1.2px;transform:scaleX(0.8658);">NOTA FISCAL ELETRONICA</span></td><td><span class="t" style="left:1404.58px;top:417.90px;font-family:'Liberation Sans', sans-serif;font-size:12px;font-weight:400;color:#000;transform:scaleX(0.8970);">3521013923</span><span class="t" style="left:1638.50px;top:417.90px;font-family:'Liberation Sans', sans-serif;font-size:12px;font-weight:400;color:#000;transform:scaleX(0.8970);">50504</span></td><td><div class="btn" style="left:1699px;top:411px;width:83px;height:22px;background:#00c0ef"></div><span class="t" style="left:1705.44px;top:417.00px;font-family:'DejaVu Sans', 'Liberation Sans', sans-serif;font-size:11px;font-weight:700;color:#fff;transform:scaleX(1.0190);">Via Manual</span></td><td><span class="t" style="left:1834.83px;top:417.90px;font-family:'Liberation Sans', sans-serif;font-size:12px;font-weight:400;color:#000;transform:scaleX(0.8970);">28280,95</span><div class="rowline" style="top:438px"></div></td></tr>
<tr><td><div class="circ" style="left:86.8px;top:441.8px;width:28.2px;height:28.2px"></div><svg class="a" style="left:89.2px;top:444.4px" width="24" height="24" viewBox="-12 -12 24 24"><circle cx="-0.8" cy="-0.7" r="3.5" fill="none" stroke="#fff" stroke-width="1.6"/><path d="M1.8,1.9 L4.9,5" stroke="#fff" stroke-width="1.9" stroke-linecap="round"/></svg></td><td><div class="circ" style="left:140.9px;top:440.8px;width:32.0px;height:30.2px"></div><svg class="a" style="left:144.0px;top:442.0px" width="24" height="24" viewBox="-12 -12 24 24"><rect x="-9.6" y="-6.5" width="19.2" height="13" fill="#fff"/><path d="M-5.4,-5.2 H5.4 L6.2,-4.2 L6.2,-2.6 L8.3,-2.6 V2.2 L5.6,5.2 H-5.4 L-6.2,4.2 L-6.2,2.6 L-8.3,2.6 V-2.6 L-6.2,-2.6 L-6.2,-4.2 Z" fill="#e8e8e8"/><ellipse cx="0" cy="0" rx="2.9" ry="4" fill="#f6f6f6"/><path d="M-0.9,-1.7 L0.3,-2.5 V2.3 M-1.1,2.4 H1.7" stroke="#dcdcdc" stroke-width="1.1" fill="none"/></svg></td><td><div class="circ" style="left:197.8px;top:440.8px;width:27.2px;height:30.2px"></div><svg class="a" style="left:199.0px;top:442.7px" width="24" height="24" viewBox="-12 -12 24 24"><g transform="rotate(-42)" fill="none" stroke="#fff" stroke-width="1.45" stroke-linecap="round"><path d="M3.3,-4.6 V4.8 A3.3,3.3 0 0 1 -3.3,4.8 V-5.6 A2.3,2.3 0 0 1 1.3,-5.6 V3.9 A1.3,1.3 0 0 1 -1.3,3.9 V-3.6"/></g></svg></td><td><div class="circ" style="left:254.7px;top:440.8px;width:31.3px;height:30.2px"></div><svg class="a" style="left:258.0px;top:442.4px" width="24" height="24" viewBox="-12 -12 24 24"><g transform="rotate(-46) scale(.87)"><path d="M-9,-5 H9 V-1.8 A1.8,1.8 0 0 0 9,1.8 V5 H-9 V1.8 A1.8,1.8 0 0 0 -9,-1.8 Z" fill="#fff"/><rect x="-5.9" y="-3" width="11.8" height="6" fill="none" stroke="#e4e4e4" stroke-width="0.9"/></g></svg></td><td><span class="t" style="left:366.52px;top:451.90px;font-family:'Liberation Sans', sans-serif;font-size:12px;font-weight:400;color:#000;transform:scaleX(0.8970);">1</span></td><td><span class="t" style="left:393.90px;top:451.90px;font-family:'Liberation Sans', sans-serif;font-size:12px;font-weight:400;color:#000;transform:scaleX(0.8970);">1</span></td><td><span class="t" style="left:447.02px;top:451.90px;font-family:'Liberation Sans', sans-serif;font-size:12px;font-weight:400;color:#000;transform:scaleX(0.8970);">1</span></td><td><span class="t" style="left:489.44px;top:451.90px;font-family:'Liberation Sans', sans-serif;font-size:12px;font-weight:400;color:#000;transform:scaleX(0.8970);">38223880</span></td><td><span class="t" style="left:570.62px;top:451.90px;font-family:'Liberation Sans', sans-serif;font-size:12px;font-weight:400;color:#000;transform:scaleX(0.8970);">1</span></td><td><span class="t" style="left:736.99px;top:451.90px;font-family:'Liberation Sans', sans-serif;font-size:12px;font-weight:400;color:#000;word-spacing:1.2px;transform:scaleX(0.8650);">AULICOS EIRELI</span></td><td><span class="t" style="left:862.79px;top:451.90px;font-family:'Liberation Sans', sans-serif;font-size:12px;font-weight:400;color:#000;word-spacing:1px;transform:scaleX(0.9120);">18<i>/</i>12<i>/</i>2020 13:57</span></td><td><span class="t" style="left:1012.34px;top:451.90px;font-family:'Liberation Sans', sans-serif;font-size:12px;font-weight:400;color:#000;transform:scaleX(0.9180);">11<i>/</i>12<i>/</i>2020</span></td><td><span class="t" style="left:1093.83px;top:451.90px;font-family:'Liberation Sans', sans-serif;font-size:12px;font-weight:400;color:#000;word-spacing:1.2px;transform:scaleX(0.8658);">NOTA FISCAL ELETRONICA</span></td><td><span class="t" style="left:1404.24px;top:451.90px;font-family:'Liberation Sans', sans-serif;font-size:12px;font-weight:400;color:#000;transform:scaleX(0.8970);">2620123822</span><span class="t" style="left:1638.67px;top:451.90px;font-family:'Liberation Sans', sans-serif;font-size:12px;font-weight:400;color:#000;transform:scaleX(0.8970);">96297</span></td><td><div class="btn" style="left:1699px;top:445px;width:83px;height:22px;background:#00c0ef"></div><span class="t" style="left:1705.44px;top:451.00px;font-family:'DejaVu Sans', 'Liberation Sans', sans-serif;font-size:11px;font-weight:700;color:#fff;transform:scaleX(1.0190);">Via Manual</span></td><td><span class="t" style="left:1846.85px;top:451.90px;font-family:'Liberation Sans', sans-serif;font-size:12px;font-weight:400;color:#000;transform:scaleX(0.8970);">816,00</span><div class="rowline" style="top:472px"></div></td></tr>
<tr><td><div class="circ" style="left:86.8px;top:475.8px;width:28.2px;height:28.2px"></div><svg class="a" style="left:89.2px;top:478.4px" width="24" height="24" viewBox="-12 -12 24 24"><circle cx="-0.8" cy="-0.7" r="3.5" fill="none" stroke="#fff" stroke-width="1.6"/><path d="M1.8,1.9 L4.9,5" stroke="#fff" stroke-width="1.9" stroke-linecap="round"/></svg></td><td><div class="circ" style="left:140.9px;top:474.8px;width:32.0px;height:30.2px"></div><svg class="a" style="left:144.0px;top:476.0px" width="24" height="24" viewBox="-12 -12 24 24"><rect x="-9.6" y="-6.5" width="19.2" height="13" fill="#fff"/><path d="M-5.4,-5.2 H5.4 L6.2,-4.2 L6.2,-2.6 L8.3,-2.6 V2.2 L5.6,5.2 H-5.4 L-6.2,4.2 L-6.2,2.6 L-8.3,2.6 V-2.6 L-6.2,-2.6 L-6.2,-4.2 Z" fill="#e8e8e8"/><ellipse cx="0" cy="0" rx="2.9" ry="4" fill="#f6f6f6"/><path d="M-0.9,-1.7 L0.3,-2.5 V2.3 M-1.1,2.4 H1.7" stroke="#dcdcdc" stroke-width="1.1" fill="none"/></svg></td><td><div class="circ" style="left:197.8px;top:474.8px;width:27.2px;height:30.2px"></div><svg class="a" style="left:199.0px;top:476.7px" width="24" height="24" viewBox="-12 -12 24 24"><g transform="rotate(-42)" fill="none" stroke="#fff" stroke-width="1.45" stroke-linecap="round"><path d="M3.3,-4.6 V4.8 A3.3,3.3 0 0 1 -3.3,4.8 V-5.6 A2.3,2.3 0 0 1 1.3,-5.6 V3.9 A1.3,1.3 0 0 1 -1.3,3.9 V-3.6"/></g></svg></td><td><div class="circ" style="left:254.7px;top:474.8px;width:31.3px;height:30.2px"></div><svg class="a" style="left:258.0px;top:476.4px" width="24" height="24" viewBox="-12 -12 24 24"><g transform="rotate(-46) scale(.87)"><path d="M-9,-5 H9 V-1.8 A1.8,1.8 0 0 0 9,1.8 V5 H-9 V1.8 A1.8,1.8 0 0 0 -9,-1.8 Z" fill="#fff"/><rect x="-5.9" y="-3" width="11.8" height="6" fill="none" stroke="#e4e4e4" stroke-width="0.9"/></g></svg></td><td><span class="t" style="left:366.52px;top:485.90px;font-family:'Liberation Sans', sans-serif;font-size:12px;font-weight:400;color:#000;transform:scaleX(0.8970);">1</span></td><td><span class="t" style="left:393.89px;top:485.90px;font-family:'Liberation Sans', sans-serif;font-size:12px;font-weight:400;color:#000;transform:scaleX(0.8970);">A</span></td><td><span class="t" style="left:447.02px;top:485.90px;font-family:'Liberation Sans', sans-serif;font-size:12px;font-weight:400;color:#000;transform:scaleX(0.8970);">1</span></td><td><span class="t" style="left:489.44px;top:485.90px;font-family:'Liberation Sans', sans-serif;font-size:12px;font-weight:400;color:#000;transform:scaleX(0.8970);">28193330</span></td><td><span class="t" style="left:570.62px;top:485.90px;font-family:'Liberation Sans', sans-serif;font-size:12px;font-weight:400;color:#000;transform:scaleX(0.8970);">1</span></td><td><span class="t" style="left:736.36px;top:485.90px;font-family:'Liberation Sans', sans-serif;font-size:12px;font-weight:400;color:#000;word-spacing:1.2px;transform:scaleX(0.8650);">DES LTDA</span></td><td><span class="t" style="left:862.21px;top:485.90px;font-family:'Liberation Sans', sans-serif;font-size:12px;font-weight:400;color:#000;word-spacing:1px;transform:scaleX(0.9340);">24<i>/</i>11<i>/</i>2017 11:27</span></td><td><span class="t" style="left:1012.43px;top:485.90px;font-family:'Liberation Sans', sans-serif;font-size:12px;font-weight:400;color:#000;transform:scaleX(0.9180);">24<i>/</i>11<i>/</i>2017</span></td><td><span class="t" style="left:1093.84px;top:485.90px;font-family:'Liberation Sans', sans-serif;font-size:12px;font-weight:400;color:#000;word-spacing:1.2px;transform:scaleX(0.8650);">NOTA FISCAL</span></td><td></td><td><div class="btn" style="left:1699px;top:479px;width:83px;height:22px;background:#00c0ef"></div><span class="t" style="left:1705.44px;top:485.00px;font-family:'DejaVu Sans', 'Liberation Sans', sans-serif;font-size:11px;font-weight:700;color:#fff;transform:scaleX(1.0190);">Via Manual</span></td><td><span class="t" style="left:1828.91px;top:485.90px;font-family:'Liberation Sans', sans-serif;font-size:12px;font-weight:400;color:#000;transform:scaleX(0.8970);">162000,00</span><div class="rowline" style="top:506px"></div></td></tr>
<tr><td><div class="circ" style="left:86.8px;top:509.8px;width:28.2px;height:28.2px"></div><svg class="a" style="left:89.2px;top:512.4px" width="24" height="24" viewBox="-12 -12 24 24"><circle cx="-0.8" cy="-0.7" r="3.5" fill="none" stroke="#fff" stroke-width="1.6"/><path d="M1.8,1.9 L4.9,5" stroke="#fff" stroke-width="1.9" stroke-linecap="round"/></svg></td><td><div class="circ" style="left:140.9px;top:508.8px;width:32.0px;height:30.2px"></div><svg class="a" style="left:144.0px;top:510.0px" width="24" height="24" viewBox="-12 -12 24 24"><rect x="-9.6" y="-6.5" width="19.2" height="13" fill="#fff"/><path d="M-5.4,-5.2 H5.4 L6.2,-4.2 L6.2,-2.6 L8.3,-2.6 V2.2 L5.6,5.2 H-5.4 L-6.2,4.2 L-6.2,2.6 L-8.3,2.6 V-2.6 L-6.2,-2.6 L-6.2,-4.2 Z" fill="#e8e8e8"/><ellipse cx="0" cy="0" rx="2.9" ry="4" fill="#f6f6f6"/><path d="M-0.9,-1.7 L0.3,-2.5 V2.3 M-1.1,2.4 H1.7" stroke="#dcdcdc" stroke-width="1.1" fill="none"/></svg></td><td><div class="circ" style="left:197.8px;top:508.8px;width:27.2px;height:30.2px"></div><svg class="a" style="left:199.0px;top:510.7px" width="24" height="24" viewBox="-12 -12 24 24"><g transform="rotate(-42)" fill="none" stroke="#fff" stroke-width="1.45" stroke-linecap="round"><path d="M3.3,-4.6 V4.8 A3.3,3.3 0 0 1 -3.3,4.8 V-5.6 A2.3,2.3 0 0 1 1.3,-5.6 V3.9 A1.3,1.3 0 0 1 -1.3,3.9 V-3.6"/></g></svg></td><td><div class="circ" style="left:254.7px;top:508.8px;width:31.3px;height:30.2px"></div><svg class="a" style="left:258.0px;top:510.4px" width="24" height="24" viewBox="-12 -12 24 24"><g transform="rotate(-46) scale(.87)"><path d="M-9,-5 H9 V-1.8 A1.8,1.8 0 0 0 9,1.8 V5 H-9 V1.8 A1.8,1.8 0 0 0 -9,-1.8 Z" fill="#fff"/><rect x="-5.9" y="-3" width="11.8" height="6" fill="none" stroke="#e4e4e4" stroke-width="0.9"/></g></svg></td><td><span class="t" style="left:366.52px;top:519.90px;font-family:'Liberation Sans', sans-serif;font-size:12px;font-weight:400;color:#000;transform:scaleX(0.8970);">1</span></td><td><span class="t" style="left:393.89px;top:519.90px;font-family:'Liberation Sans', sans-serif;font-size:12px;font-weight:400;color:#000;transform:scaleX(0.8970);">A</span></td><td><span class="t" style="left:447.02px;top:519.90px;font-family:'Liberation Sans', sans-serif;font-size:12px;font-weight:400;color:#000;transform:scaleX(0.8970);">1</span></td><td><span class="t" style="left:495.64px;top:519.90px;font-family:'Liberation Sans', sans-serif;font-size:12px;font-weight:400;color:#000;transform:scaleX(0.8970);">3664967</span></td><td><span class="t" style="left:570.62px;top:519.90px;font-family:'Liberation Sans', sans-serif;font-size:12px;font-weight:400;color:#000;transform:scaleX(0.8970);">1</span></td><td><span class="t" style="left:738.38px;top:519.90px;font-family:'Liberation Sans', sans-serif;font-size:12px;font-weight:400;color:#000;word-spacing:1.2px;transform:scaleX(0.8650);">A PECAS LTDA ME</span></td><td><span class="t" style="left:862.78px;top:519.90px;font-family:'Liberation Sans', sans-serif;font-size:12px;font-weight:400;color:#000;word-spacing:1px;transform:scaleX(0.9190);">16<i>/</i>11<i>/</i>2017 09:42</span></td><td><span class="t" style="left:1012.43px;top:519.90px;font-family:'Liberation Sans', sans-serif;font-size:12px;font-weight:400;color:#000;transform:scaleX(0.9180);">15<i>/</i>11<i>/</i>2017</span></td><td><span class="t" style="left:1093.84px;top:519.90px;font-family:'Liberation Sans', sans-serif;font-size:12px;font-weight:400;color:#000;word-spacing:1.2px;transform:scaleX(0.8650);">NOTA FISCAL</span></td><td></td><td><div class="btn" style="left:1699px;top:513px;width:83px;height:22px;background:#00c0ef"></div><span class="t" style="left:1705.44px;top:519.00px;font-family:'DejaVu Sans', 'Liberation Sans', sans-serif;font-size:11px;font-weight:700;color:#fff;transform:scaleX(1.0190);">Via Manual</span></td><td><span class="t" style="left:1840.81px;top:519.90px;font-family:'Liberation Sans', sans-serif;font-size:12px;font-weight:400;color:#000;transform:scaleX(0.8970);">1700,00</span><div class="rowline" style="top:540px"></div></td></tr>
<tr><td><div class="circ" style="left:86.8px;top:543.8px;width:28.2px;height:28.2px"></div><svg class="a" style="left:89.2px;top:546.4px" width="24" height="24" viewBox="-12 -12 24 24"><circle cx="-0.8" cy="-0.7" r="3.5" fill="none" stroke="#fff" stroke-width="1.6"/><path d="M1.8,1.9 L4.9,5" stroke="#fff" stroke-width="1.9" stroke-linecap="round"/></svg></td><td><div class="circ" style="left:140.9px;top:542.8px;width:32.0px;height:30.2px"></div><svg class="a" style="left:144.0px;top:544.0px" width="24" height="24" viewBox="-12 -12 24 24"><rect x="-9.6" y="-6.5" width="19.2" height="13" fill="#fff"/><path d="M-5.4,-5.2 H5.4 L6.2,-4.2 L6.2,-2.6 L8.3,-2.6 V2.2 L5.6,5.2 H-5.4 L-6.2,4.2 L-6.2,2.6 L-8.3,2.6 V-2.6 L-6.2,-2.6 L-6.2,-4.2 Z" fill="#e8e8e8"/><ellipse cx="0" cy="0" rx="2.9" ry="4" fill="#f6f6f6"/><path d="M-0.9,-1.7 L0.3,-2.5 V2.3 M-1.1,2.4 H1.7" stroke="#dcdcdc" stroke-width="1.1" fill="none"/></svg></td><td><div class="circ" style="left:197.8px;top:542.8px;width:27.2px;height:30.2px"></div><svg class="a" style="left:199.0px;top:544.7px" width="24" height="24" viewBox="-12 -12 24 24"><g transform="rotate(-42)" fill="none" stroke="#fff" stroke-width="1.45" stroke-linecap="round"><path d="M3.3,-4.6 V4.8 A3.3,3.3 0 0 1 -3.3,4.8 V-5.6 A2.3,2.3 0 0 1 1.3,-5.6 V3.9 A1.3,1.3 0 0 1 -1.3,3.9 V-3.6"/></g></svg></td><td><div class="circ" style="left:254.7px;top:542.8px;width:31.3px;height:30.2px"></div><svg class="a" style="left:258.0px;top:544.4px" width="24" height="24" viewBox="-12 -12 24 24"><g transform="rotate(-46) scale(.87)"><path d="M-9,-5 H9 V-1.8 A1.8,1.8 0 0 0 9,1.8 V5 H-9 V1.8 A1.8,1.8 0 0 0 -9,-1.8 Z" fill="#fff"/><rect x="-5.9" y="-3" width="11.8" height="6" fill="none" stroke="#e4e4e4" stroke-width="0.9"/></g></svg></td><td><span class="t" style="left:366.52px;top:553.90px;font-family:'Liberation Sans', sans-serif;font-size:12px;font-weight:400;color:#000;transform:scaleX(0.8970);">1</span></td><td><span class="t" style="left:393.89px;top:553.90px;font-family:'Liberation Sans', sans-serif;font-size:12px;font-weight:400;color:#000;transform:scaleX(0.8970);">A</span></td><td><span class="t" style="left:447.02px;top:553.90px;font-family:'Liberation Sans', sans-serif;font-size:12px;font-weight:400;color:#000;transform:scaleX(0.8970);">1</span></td><td><span class="t" style="left:489.52px;top:553.90px;font-family:'Liberation Sans', sans-serif;font-size:12px;font-weight:400;color:#000;transform:scaleX(0.8970);">28634193</span></td><td><span class="t" style="left:570.62px;top:553.90px;font-family:'Liberation Sans', sans-serif;font-size:12px;font-weight:400;color:#000;transform:scaleX(0.8970);">1</span></td><td><span class="t" style="left:740.24px;top:553.90px;font-family:'Liberation Sans', sans-serif;font-size:12px;font-weight:400;color:#000;word-spacing:1.2px;transform:scaleX(0.8650);">HO MECANICA ME</span></td><td><span class="t" style="left:862.33px;top:553.90px;font-family:'Liberation Sans', sans-serif;font-size:12px;font-weight:400;color:#000;word-spacing:1px;transform:scaleX(0.9235);">08<i>/</i>11<i>/</i>2017 09:59</span></td><td><span class="t" style="left:1012.43px;top:553.90px;font-family:'Liberation Sans', sans-serif;font-size:12px;font-weight:400;color:#000;transform:scaleX(0.9180);">06<i>/</i>11<i>/</i>2017</span></td><td><span class="t" style="left:1093.84px;top:553.90px;font-family:'Liberation Sans', sans-serif;font-size:12px;font-weight:400;color:#000;word-spacing:1.2px;transform:scaleX(0.8650);">NOTA FISCAL</span></td><td></td><td><div class="btn" style="left:1699px;top:547px;width:83px;height:22px;background:#00c0ef"></div><span class="t" style="left:1705.44px;top:553.00px;font-family:'DejaVu Sans', 'Liberation Sans', sans-serif;font-size:11px;font-weight:700;color:#fff;transform:scaleX(1.0190);">Via Manual</span></td><td><span class="t" style="left:1834.76px;top:553.90px;font-family:'Liberation Sans', sans-serif;font-size:12px;font-weight:400;color:#000;transform:scaleX(0.8970);">19490,00</span><div class="rowline" style="top:574px"></div></td></tr>
<tr><td><div class="circ" style="left:86.8px;top:577.8px;width:28.2px;height:28.2px"></div><svg class="a" style="left:89.2px;top:580.4px" width="24" height="24" viewBox="-12 -12 24 24"><circle cx="-0.8" cy="-0.7" r="3.5" fill="none" stroke="#fff" stroke-width="1.6"/><path d="M1.8,1.9 L4.9,5" stroke="#fff" stroke-width="1.9" stroke-linecap="round"/></svg></td><td><div class="circ" style="left:140.9px;top:576.8px;width:32.0px;height:30.2px"></div><svg class="a" style="left:144.0px;top:578.0px" width="24" height="24" viewBox="-12 -12 24 24"><rect x="-9.6" y="-6.5" width="19.2" height="13" fill="#fff"/><path d="M-5.4,-5.2 H5.4 L6.2,-4.2 L6.2,-2.6 L8.3,-2.6 V2.2 L5.6,5.2 H-5.4 L-6.2,4.2 L-6.2,2.6 L-8.3,2.6 V-2.6 L-6.2,-2.6 L-6.2,-4.2 Z" fill="#e8e8e8"/><ellipse cx="0" cy="0" rx="2.9" ry="4" fill="#f6f6f6"/><path d="M-0.9,-1.7 L0.3,-2.5 V2.3 M-1.1,2.4 H1.7" stroke="#dcdcdc" stroke-width="1.1" fill="none"/></svg></td><td><div class="circ" style="left:197.8px;top:576.8px;width:27.2px;height:30.2px"></div><svg class="a" style="left:199.0px;top:578.7px" width="24" height="24" viewBox="-12 -12 24 24"><g transform="rotate(-42)" fill="none" stroke="#fff" stroke-width="1.45" stroke-linecap="round"><path d="M3.3,-4.6 V4.8 A3.3,3.3 0 0 1 -3.3,4.8 V-5.6 A2.3,2.3 0 0 1 1.3,-5.6 V3.9 A1.3,1.3 0 0 1 -1.3,3.9 V-3.6"/></g></svg></td><td><div class="circ" style="left:254.7px;top:576.8px;width:31.3px;height:30.2px"></div><svg class="a" style="left:258.0px;top:578.4px" width="24" height="24" viewBox="-12 -12 24 24"><g transform="rotate(-46) scale(.87)"><path d="M-9,-5 H9 V-1.8 A1.8,1.8 0 0 0 9,1.8 V5 H-9 V1.8 A1.8,1.8 0 0 0 -9,-1.8 Z" fill="#fff"/><rect x="-5.9" y="-3" width="11.8" height="6" fill="none" stroke="#e4e4e4" stroke-width="0.9"/></g></svg></td><td><span class="t" style="left:366.52px;top:587.90px;font-family:'Liberation Sans', sans-serif;font-size:12px;font-weight:400;color:#000;transform:scaleX(0.8970);">1</span></td><td><span class="t" style="left:393.89px;top:587.90px;font-family:'Liberation Sans', sans-serif;font-size:12px;font-weight:400;color:#000;transform:scaleX(0.8970);">A</span></td><td><span class="t" style="left:447.02px;top:587.90px;font-family:'Liberation Sans', sans-serif;font-size:12px;font-weight:400;color:#000;transform:scaleX(0.8970);">1</span></td><td><span class="t" style="left:490.42px;top:587.90px;font-family:'Liberation Sans', sans-serif;font-size:12px;font-weight:400;color:#000;transform:scaleX(0.8970);">11502403</span></td><td><span class="t" style="left:570.62px;top:587.90px;font-family:'Liberation Sans', sans-serif;font-size:12px;font-weight:400;color:#000;transform:scaleX(0.8970);">1</span></td><td><span class="t" style="left:736.06px;top:587.90px;font-family:'Liberation Sans', sans-serif;font-size:12px;font-weight:400;color:#000;word-spacing:1.2px;transform:scaleX(0.8650);">ADOS LTDA EPP</span></td><td><span class="t" style="left:862.78px;top:587.90px;font-family:'Liberation Sans', sans-serif;font-size:12px;font-weight:400;color:#000;word-spacing:1px;transform:scaleX(0.9189);">19<i>/</i>09<i>/</i>2017 11:13</span></td><td><span class="t" style="left:1011.51px;top:587.90px;font-family:'Liberation Sans', sans-serif;font-size:12px;font-weight:400;color:#000;transform:scaleX(0.9180);">18<i>/</i>09<i>/</i>2017</span></td><td><span class="t" style="left:1093.84px;top:587.90px;font-family:'Liberation Sans', sans-serif;font-size:12px;font-weight:400;color:#000;word-spacing:1.2px;transform:scaleX(0.8650);">NOTA FISCAL</span></td><td></td><td><div class="btn" style="left:1699px;top:581px;width:83px;height:22px;background:#00c0ef"></div><span class="t" style="left:1705.44px;top:587.00px;font-family:'DejaVu Sans', 'Liberation Sans', sans-serif;font-size:11px;font-weight:700;color:#fff;transform:scaleX(1.0190);">Via Manual</span></td><td><span class="t" style="left:1840.81px;top:587.90px;font-family:'Liberation Sans', sans-serif;font-size:12px;font-weight:400;color:#000;transform:scaleX(0.8970);">1400,00</span><div class="rowline" style="top:608px"></div></td></tr>
<tr><td><div class="circ" style="left:86.8px;top:611.8px;width:28.2px;height:28.2px"></div><svg class="a" style="left:89.2px;top:614.4px" width="24" height="24" viewBox="-12 -12 24 24"><circle cx="-0.8" cy="-0.7" r="3.5" fill="none" stroke="#fff" stroke-width="1.6"/><path d="M1.8,1.9 L4.9,5" stroke="#fff" stroke-width="1.9" stroke-linecap="round"/></svg></td><td><div class="circ" style="left:140.9px;top:610.8px;width:32.0px;height:30.2px"></div><svg class="a" style="left:144.0px;top:612.0px" width="24" height="24" viewBox="-12 -12 24 24"><rect x="-9.6" y="-6.5" width="19.2" height="13" fill="#fff"/><path d="M-5.4,-5.2 H5.4 L6.2,-4.2 L6.2,-2.6 L8.3,-2.6 V2.2 L5.6,5.2 H-5.4 L-6.2,4.2 L-6.2,2.6 L-8.3,2.6 V-2.6 L-6.2,-2.6 L-6.2,-4.2 Z" fill="#e8e8e8"/><ellipse cx="0" cy="0" rx="2.9" ry="4" fill="#f6f6f6"/><path d="M-0.9,-1.7 L0.3,-2.5 V2.3 M-1.1,2.4 H1.7" stroke="#dcdcdc" stroke-width="1.1" fill="none"/></svg></td><td><div class="circ" style="left:197.8px;top:610.8px;width:27.2px;height:30.2px"></div><svg class="a" style="left:199.0px;top:612.7px" width="24" height="24" viewBox="-12 -12 24 24"><g transform="rotate(-42)" fill="none" stroke="#fff" stroke-width="1.45" stroke-linecap="round"><path d="M3.3,-4.6 V4.8 A3.3,3.3 0 0 1 -3.3,4.8 V-5.6 A2.3,2.3 0 0 1 1.3,-5.6 V3.9 A1.3,1.3 0 0 1 -1.3,3.9 V-3.6"/></g></svg></td><td><div class="circ" style="left:254.7px;top:610.8px;width:31.3px;height:30.2px"></div><svg class="a" style="left:258.0px;top:612.4px" width="24" height="24" viewBox="-12 -12 24 24"><g transform="rotate(-46) scale(.87)"><path d="M-9,-5 H9 V-1.8 A1.8,1.8 0 0 0 9,1.8 V5 H-9 V1.8 A1.8,1.8 0 0 0 -9,-1.8 Z" fill="#fff"/><rect x="-5.9" y="-3" width="11.8" height="6" fill="none" stroke="#e4e4e4" stroke-width="0.9"/></g></svg></td><td><span class="t" style="left:366.52px;top:621.90px;font-family:'Liberation Sans', sans-serif;font-size:12px;font-weight:400;color:#000;transform:scaleX(0.8970);">1</span></td><td><span class="t" style="left:393.89px;top:621.90px;font-family:'Liberation Sans', sans-serif;font-size:12px;font-weight:400;color:#000;transform:scaleX(0.8970);">A</span></td><td><span class="t" style="left:447.02px;top:621.90px;font-family:'Liberation Sans', sans-serif;font-size:12px;font-weight:400;color:#000;transform:scaleX(0.8970);">1</span></td><td><span class="t" style="left:489.54px;top:621.90px;font-family:'Liberation Sans', sans-serif;font-size:12px;font-weight:400;color:#000;transform:scaleX(0.8970);">19242986</span></td><td><span class="t" style="left:570.62px;top:621.90px;font-family:'Liberation Sans', sans-serif;font-size:12px;font-weight:400;color:#000;transform:scaleX(0.8970);">1</span></td><td><span class="t" style="left:744.08px;top:621.90px;font-family:'Liberation Sans', sans-serif;font-size:12px;font-weight:400;color:#000;word-spacing:1.2px;transform:scaleX(0.8650);">ME</span></td><td><span class="t" style="left:862.34px;top:621.90px;font-family:'Liberation Sans', sans-serif;font-size:12px;font-weight:400;color:#000;word-spacing:1px;transform:scaleX(0.9163);">08<i>/</i>09<i>/</i>2017 15:01</span></td><td><span class="t" style="left:1011.51px;top:621.90px;font-family:'Liberation Sans', sans-serif;font-size:12px;font-weight:400;color:#000;transform:scaleX(0.9180);">07<i>/</i>09<i>/</i>2017</span></td><td><span class="t" style="left:1093.84px;top:621.90px;font-family:'Liberation Sans', sans-serif;font-size:12px;font-weight:400;color:#000;word-spacing:1.2px;transform:scaleX(0.8650);">NOTA FISCAL</span></td><td></td><td><div class="btn" style="left:1699px;top:615px;width:83px;height:22px;background:#00c0ef"></div><span class="t" style="left:1705.44px;top:621.00px;font-family:'DejaVu Sans', 'Liberation Sans', sans-serif;font-size:11px;font-weight:700;color:#fff;transform:scaleX(1.0190);">Via Manual</span></td><td><span class="t" style="left:1835.65px;top:621.90px;font-family:'Liberation Sans', sans-serif;font-size:12px;font-weight:400;color:#000;transform:scaleX(0.8970);">11000,00</span><div class="rowline" style="top:642px"></div></td></tr>
</tbody></table><div class="a" style="left:590px;top:309px;width:152px;height:329px;z-index:4;background:linear-gradient(90deg,#f3f3f3,#ececec 50%,#e9e9e9)"></div><div class="a" style="left:1461px;top:309px;width:179px;height:156px;z-index:4;background:linear-gradient(90deg,#ebebeb,#e8e8e8 60%,#ececec)"></div><div class="a" style="left:69px;top:643px;width:1818px;height:15px;background:#fafafa"></div><svg class="a" style="left:72px;top:645px" width="8" height="11" viewBox="72 645 8 11"><path d="M78.2,646.2 V654.9 L72.9,650.5 Z" fill="#505050"/></svg><div class="a" style="left:86px;top:646.2px;width:1781px;height:8.6px;border-radius:4.3px;background:#8b8b8b"></div><svg class="a" style="left:1875px;top:645px" width="8" height="11" viewBox="1875 645 8 11"><path d="M1876,646.2 V654.9 L1881.3,650.5 Z" fill="#8b8b8b"/></svg><div class="a" style="left:1887px;top:270px;width:17px;height:425px;background:#fafafa"></div><svg class="a" style="left:1891px;top:275px" width="11" height="7" viewBox="1891 275 11 7"><path d="M1891.8,281.1 H1901.2 L1896.5,276.1 Z" fill="#a3a3a3"/></svg><div class="a" style="left:1892.2px;top:287.7px;width:8.7px;height:387px;border-radius:4.35px;background:#8b8b8b"></div><svg class="a" style="left:1891px;top:682px" width="11" height="7" viewBox="1891 682 11 7"><path d="M1891.8,683.3 H1901.2 L1896.5,688.3 Z" fill="#8b8b8b"/></svg><footer><div class="a" style="left:69px;top:658px;width:1819px;height:37px;background:#f5f5f5;border:1px solid #ddd;border-top:none"></div><span class="t" style="left:93.38px;top:669.60px;font-family:'DejaVu Sans', 'Liberation Sans', sans-serif;font-size:14.6px;font-weight:200;color:#5e5e5e;letter-spacing:0.25px;transform:scaleX(1.0195);">Página 1 de 7371</span><nav><ul><li><div class="pg" style="left:1617.0px;width:45.5px;background:#f7f7f7;border-radius:4px 0 0 4px;"></div><span class="t" style="left:1630.80px;top:674.00px;font-family:'DejaVu Sans', 'Liberation Sans', sans-serif;font-size:9.2px;font-weight:400;color:#999;letter-spacing:1px;transform:scaleX(1.0647);">Ant</span></li><li><div class="pg" style="left:1662.0px;width:36.0px;background:#3071ae;border-color:#3071ae;z-index:2;"></div><span class="t" style="left:1675.64px;top:674.00px;font-family:'DejaVu Sans', 'Liberation Sans', sans-serif;font-size:9.2px;font-weight:400;color:#fff;transform:scaleX(1.5334);">1</span></li><li><div class="pg" style="left:1697.5px;width:34.8px;background:#fff;"></div><span class="t" style="left:1711.47px;top:674.00px;font-family:'DejaVu Sans', 'Liberation Sans', sans-serif;font-size:9.2px;font-weight:400;color:#337ab7;transform:scaleX(1.3266);">2</span></li><li><div class="pg" style="left:1731.3px;width:34.7px;background:#fff;"></div><span class="t" style="left:1745.17px;top:674.00px;font-family:'DejaVu Sans', 'Liberation Sans', sans-serif;font-size:9.2px;font-weight:400;color:#337ab7;transform:scaleX(1.2930);">3</span></li><li><div class="pg" style="left:1765.0px;width:35.1px;background:#fff;"></div><span class="t" style="left:1779.35px;top:674.00px;font-family:'DejaVu Sans', 'Liberation Sans', sans-serif;font-size:9.2px;font-weight:400;color:#337ab7;transform:scaleX(1.1820);">4</span></li><li><div class="pg" style="left:1799.1px;width:35.8px;background:#fff;"></div><span class="t" style="left:1813.51px;top:674.00px;font-family:'DejaVu Sans', 'Liberation Sans', sans-serif;font-size:9.2px;font-weight:400;color:#337ab7;transform:scaleX(1.3065);">5</span></li><li><div class="pg" style="left:1833.9px;width:49.1px;background:#fff;border-radius:0 4px 4px 0;"></div><span class="t" style="left:1847.93px;top:674.00px;font-family:'DejaVu Sans', 'Liberation Sans', sans-serif;font-size:9.2px;font-weight:400;color:#337ab7;letter-spacing:1px;transform:scaleX(1.1126);">Seg</span></li></ul></nav></footer></section></main>
</body>
</html>
